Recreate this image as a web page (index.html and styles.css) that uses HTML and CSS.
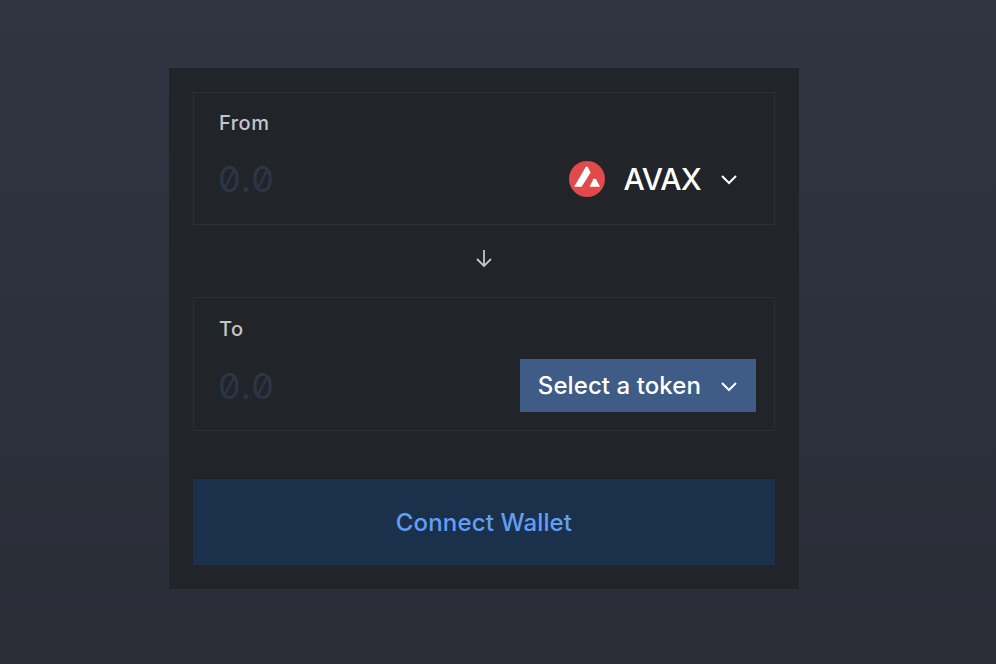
FILE: index.html
```html
<!DOCTYPE html>
<html>
<head>
    <meta charset="UTF-8">
    <title>Swap</title>
    <link rel="stylesheet" href="styles.css">
</head>
<body>
    <div class="card">
        <div class="panel">
            <div class="panel-label">From</div>
            <div class="panel-row">
                <input class="amount" placeholder="0.0" readonly>
                <button class="token">
                    <svg class="token-logo" viewBox="0 0 36 36">
                        <circle cx="18" cy="18" r="18" fill="#e04a4a"/>
                        <path d="M16.4 6.4Q17.7 4.6 19 6.4L21.6 11.6 12.6 25.8H5.2z" fill="#fff"/>
                        <path d="M24.3 18.3Q25.7 16.6 27 18.3L31 25.8H20.6z" fill="#fff"/>
                    </svg>
                    <span class="token-name">AVAX</span>
                    <svg class="chevron" viewBox="0 0 24 24"><path d="M5 9l7 7 7-7"/></svg>
                </button>
            </div>
        </div>
        <div class="arrow-row">
            <svg class="arrow" viewBox="0 0 24 24"><path d="M12 4v16M5 13l7 7 7-7"/></svg>
        </div>
        <div class="panel panel-to">
            <div class="panel-label">To</div>
            <div class="panel-row">
                <input class="amount" placeholder="0.0" readonly>
                <button class="token token-select">
                    <span>Select a token</span>
                    <svg class="chevron" viewBox="0 0 24 24"><path d="M5 9l7 7 7-7"/></svg>
                </button>
            </div>
        </div>
        <button class="connect">Connect Wallet</button>
    </div>
</body>
</html>
```
FILE: styles.css
```css
* {
    box-sizing: border-box;
}
body {
    font-family: Inter, 'Noto Sans', sans-serif;
    margin: 0;
    height: 664px;
    overflow: hidden;
    background: linear-gradient(180deg, #2f3541 0%, #2a2d36 100%);
    padding-top: 68px;
}
.card {
    width: 630px;
    height: 521px;
    margin-left: 169px;
    padding: 24px;
    background-color: #212429;
}
.panel {
    height: 133px;
    padding: 16px 18px 0 24px;
    border: 1px solid #2c2f36;
}
.panel-to {
    height: 134px;
    padding-top: 17px;
}
.panel-label {
    padding-left: 1px;
    color: #c3c5cb;
    font-size: 20px;
    font-weight: 500;
    line-height: 28px;
    letter-spacing: 0.5px;
}
.panel-row {
    display: flex;
    align-items: center;
    justify-content: space-between;
    margin-top: 15px;
}
.panel-to .panel-row {
    margin-top: 16px;
}
.amount {
    width: 200px;
    padding: 0;
    border: none;
    outline: none;
    background: transparent;
    font-family: Inter, sans-serif;
    font-feature-settings: 'zero';
    font-size: 36px;
    letter-spacing: 1px;
}
.amount::placeholder {
    color: #2c3545;
    opacity: 1;
}
.token {
    display: flex;
    align-items: center;
    height: 53px;
    padding: 0 15px 0 18px;
    border: none;
    background: transparent;
    color: #fff;
    font-family: inherit;
    font-size: 24px;
    font-weight: 500;
    letter-spacing: 0.08px;
}
.token-logo {
    width: 36px;
    height: 36px;
    margin-right: 18px;
}
.token-name {
    font-size: 30px;
    letter-spacing: -0.75px;
}
.chevron {
    width: 24px;
    height: 24px;
    margin-left: 16px;
    fill: none;
    stroke: #fff;
    stroke-width: 2;
}
.token-select {
    background-color: #3e5c85;
}
.arrow-row {
    display: flex;
    align-items: center;
    justify-content: center;
    height: 72px;
    padding-bottom: 6px;
}
.arrow {
    width: 24px;
    height: 24px;
    fill: none;
    stroke: #c3c5cb;
    stroke-width: 1.8;
}
.connect {
    display: block;
    width: 100%;
    height: 86px;
    margin-top: 48px;
    border: none;
    background-color: #1b304b;
    color: #629ff4;
    font-family: inherit;
    font-size: 24px;
    font-weight: 500;
    letter-spacing: 0.15px;
}
```
